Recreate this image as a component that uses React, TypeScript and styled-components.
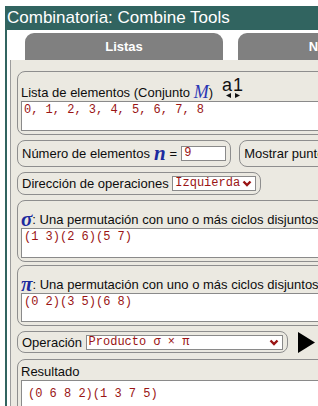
import styled, { createGlobalStyle } from "styled-components"

const GlobalStyle = createGlobalStyle`
    html, body { margin: 0; padding: 0; background: #ffffff; overflow: hidden; }
    body { font-family: "Liberation Sans", Arial, sans-serif; color: #111; }
`

function Chevron() {
    return (
        <svg width="10" height="7" viewBox="0 0 10 7">
            <polyline points="1.5,1.5 5,5 8.5,1.5" fill="none" stroke="#9a1414" strokeWidth="2.4" />
        </svg>
    )
}

function SortToggle() {
    return (
        <Sort>
            <SortText>a1</SortText>
            <svg width="14" height="5" viewBox="0 0 14 5">
                <polygon points="0,2.5 5,0 5,5" fill="#111" />
                <polygon points="14,2.5 9,0 9,5" fill="#111" />
            </svg>
        </Sort>
    )
}

function App() {
    return (
        <>
            <GlobalStyle />
            <Frame>
                <TitleBar>Combinatoria: Combine Tools</TitleBar>
                <Body>
                    <TabRow>
                        <Tab>Listas</Tab>
                        <Tab>Números</Tab>
                    </TabRow>
                    <Panel>
                        <Group $padTop={7}>
                            <LabelRow $height={22}>
                                Lista de elementos (Conjunto&nbsp;<MathM>M</MathM>)
                                <SortToggle />
                            </LabelRow>
                            <TextBox $height={30}>0, 1, 2, 3, 4, 5, 6, 7, 8</TextBox>
                        </Group>

                        <InlineRow $gap={5}>
                            <Pill $height={27}>
                                Número de elementos<MathSym $space={4}>n</MathSym>
                                <Equals>=</Equals>
                                <NumInput>9</NumInput>
                            </Pill>
                            <Pill $height={27}>Mostrar puntos fijos</Pill>
                        </InlineRow>

                        <InlineRow $gap={5}>
                            <Pill $height={23}>
                                Dirección de operaciones&nbsp;
                                <Select $width={84}>
                                    Izquierda
                                    <Chevron />
                                </Select>
                            </Pill>
                        </InlineRow>

                        <Group $padTop={9} $gap={5}>
                            <LabelRow $height={18}>
                                <MathSym>σ</MathSym>: Una permutación con uno o más ciclos disjuntos
                            </LabelRow>
                            <TextBox $height={30}>(1 3)(2 6)(5 7)</TextBox>
                        </Group>

                        <Group $padTop={9} $gap={3}>
                            <LabelRow $height={18}>
                                <MathSym>π</MathSym>: Una permutación con uno o más ciclos disjuntos
                            </LabelRow>
                            <TextBox $height={29}>(0 2)(3 5)(6 8)</TextBox>
                        </Group>

                        <InlineRow $gap={5}>
                            <Pill $height={22}>
                                Operación&nbsp;
                                <Select $width={197}>
                                    Producto σ × π
                                    <Chevron />
                                </Select>
                            </Pill>
                            <PlayButton>
                                <svg width="17" height="21" viewBox="0 0 17 21">
                                    <polygon points="0,0 17,10.5 0,21" fill="#000" />
                                </svg>
                            </PlayButton>
                        </InlineRow>

                        <Group $padTop={2} $gap={6}>
                            <LabelRow $height={18}>Resultado</LabelRow>
                            <TextBox $height={60} $padLeft={6} $padTop={6}>(0 6 8 2)(1 3 7 5)</TextBox>
                        </Group>
                    </Panel>
                </Body>
            </Frame>
        </>
    )
}

const Frame = styled.div`
    margin: 6px 0 0 5px;
    width: 660px;
    min-height: 420px;
    border-left: 2px solid #316460;
    background: #ffffff;
`

const TitleBar = styled.div`
    height: 24px;
    margin-left: -2px;
    padding-left: 2px;
    background: #316460;
    color: #ffffff;
    font-size: 17px;
    line-height: 24px;
    white-space: nowrap;
`

const Body = styled.div`
    padding-left: 3px;
`

const TabRow = styled.div`
    display: flex;
    column-gap: 15px;
    padding: 3px 0 0 15px;
`

const Tab = styled.div`
    flex-shrink: 0;
    width: 198px;
    height: 27px;
    display: flex;
    align-items: center;
    justify-content: center;
    background: #808080;
    border-radius: 9px 9px 0 0;
    color: #ffffff;
    font-weight: 700;
    font-size: 13px;
`

const Panel = styled.div`
    display: flex;
    flex-direction: column;
    align-items: flex-start;
    min-height: 400px;
    padding: 11px 0 0 6px;
    background: #ebe9e1;
    border-left: 1px solid #9c9c9c;
`

const Group = styled.div<{ $padTop: number; $gap?: number }>`
    box-sizing: border-box;
    width: 620px;
    margin-top: ${p => p.$gap ?? 0}px;
    padding: ${p => p.$padTop}px 3px 3px 3px;
    border: 1px solid #8e8e8e;
    border-radius: 8px;
`

const LabelRow = styled.div<{ $height: number }>`
    display: flex;
    align-items: flex-end;
    height: ${p => p.$height}px;
    font-size: 13px;
    line-height: 17px;
    white-space: nowrap;
    color: #0d0d0d;
`

const MathM = styled.span`
    font-family: "Liberation Serif", "Times New Roman", serif;
    font-style: italic;
    font-size: 18px;
    line-height: 17px;
    color: #2a36b4;
`

const MathSym = styled.span<{ $space?: number }>`
    margin-left: ${p => p.$space ?? 0}px;
    font-family: "Liberation Serif", "Times New Roman", serif;
    font-style: italic;
    font-weight: 700;
    font-size: 21px;
    line-height: 17px;
    color: #1c2a9e;
`

const Equals = styled.span`
    margin: 0 4px 0 4px;
`

const Sort = styled.span`
    display: inline-flex;
    flex-direction: column;
    align-items: center;
    margin: 0 0 3px 9px;
`

const SortText = styled.span`
    font-size: 18px;
    line-height: 15px;
    letter-spacing: 1px;
    color: #111;
`

const TextBox = styled.div<{ $height: number; $padLeft?: number; $padTop?: number }>`
    box-sizing: border-box;
    height: ${p => p.$height}px;
    padding: ${p => p.$padTop ?? 1}px 2px 0 ${p => p.$padLeft ?? 2}px;
    background: #ffffff;
    border: 1px solid #8a8a8a;
    font-family: "Liberation Mono", "Courier New", monospace;
    font-size: 12px;
    line-height: 14px;
    color: #9a1414;
    white-space: pre;
`

const InlineRow = styled.div<{ $gap: number }>`
    display: flex;
    align-items: center;
    column-gap: 8px;
    margin-top: ${p => p.$gap}px;
`

const Pill = styled.div<{ $height: number }>`
    box-sizing: border-box;
    display: flex;
    align-items: center;
    height: ${p => p.$height}px;
    padding: 0 4px 0 4px;
    border: 1px solid #8e8e8e;
    border-radius: 8px;
    font-size: 13px;
    white-space: nowrap;
    color: #0d0d0d;
`

const NumInput = styled.div`
    box-sizing: border-box;
    width: 45px;
    height: 15px;
    padding-left: 2px;
    background: #ffffff;
    border: 1px solid #8a8a8a;
    font-family: "Liberation Mono", "Courier New", monospace;
    font-size: 12px;
    line-height: 13px;
    color: #9a1414;
`

const Select = styled.div<{ $width: number }>`
    box-sizing: border-box;
    display: flex;
    align-items: center;
    justify-content: space-between;
    width: ${p => p.$width}px;
    height: 15px;
    padding: 0 3px 0 2px;
    background: #ffffff;
    border: 1px solid #8a8a8a;
    font-family: "Liberation Mono", "Courier New", monospace;
    font-size: 12px;
    line-height: 13px;
    color: #9a1414;
`

const PlayButton = styled.div`
    display: flex;
    margin-left: 2px;
`

export default App
